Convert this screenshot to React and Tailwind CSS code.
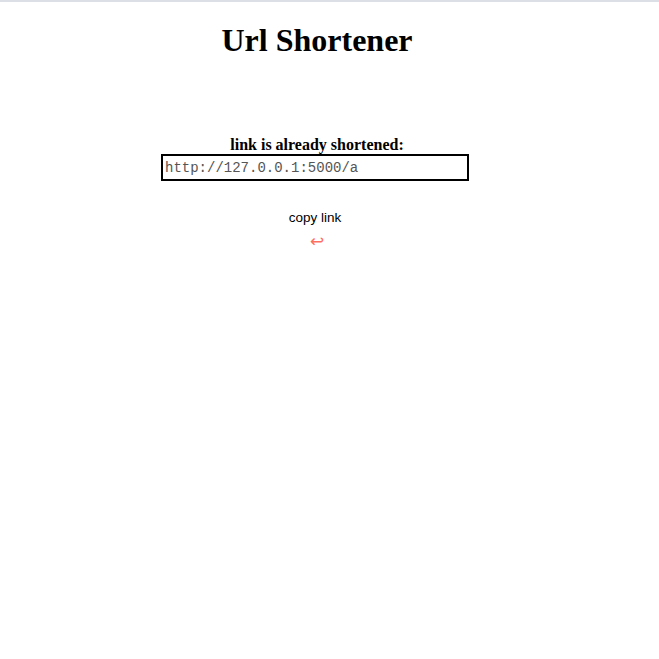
import React from 'react';

export default function App() {
  return (
    <div className="min-h-[659px] bg-white border-t-2 border-[#dcdfe6]">
      <div className="w-[634px] flex flex-col items-center">
        <h1 className="mt-[20px] text-[32px] leading-[37px] font-bold text-black font-['Liberation_Serif',serif]">
          Url Shortener
        </h1>

        {/* shortened result */}
        <div className="mt-[76px] flex flex-col items-center">
          <label className="text-[16px] leading-[19px] font-bold text-black font-['Liberation_Serif',serif]">
            link is already shortened:
          </label>
          <input
            readOnly
            value="http://127.0.0.1:5000/a"
            className="ml-[-4px] w-[308px] h-[27px] border-2 border-black px-[2px] text-[14px] text-[#555] outline-none font-['Liberation_Mono',monospace]"
          />
        </div>

        <button className="mt-[29px] ml-[-4px] text-[13.5px] leading-[16px] text-black font-['Liberation_Sans',sans-serif]">
          copy link
        </button>
        <span className="mt-[5px] text-[17px] leading-[20px] text-[#ff6f61] font-['DejaVu_Sans',sans-serif]">
          ↩
        </span>
      </div>
    </div>
  );
}
